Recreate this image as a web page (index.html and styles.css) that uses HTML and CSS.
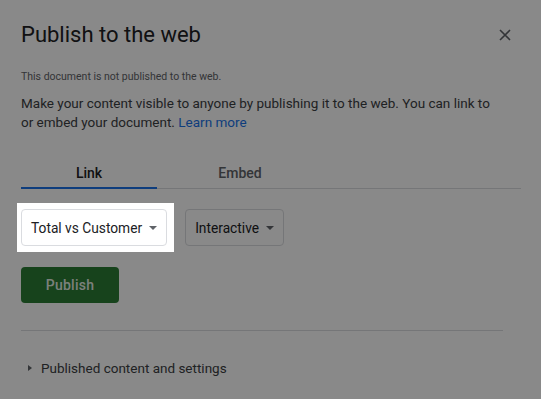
FILE: index.html
```html
<!DOCTYPE html>
<html lang="en">
<head>
<meta charset="utf-8">
<title>Publish to the web</title>
<link rel="stylesheet" href="styles.css">
</head>
<body>
<div class="dialog">
  <header class="head">
    <h1 class="title">Publish to the web</h1>
    <button class="close" aria-label="Close">
      <svg width="12" height="12" viewBox="0 0 12 12"><path d="M1 1L11 11M11 1L1 11" stroke="#5f6368" stroke-width="1.6" fill="none"/></svg>
    </button>
  </header>
  <p class="status">This document is not published to the web.</p>
  <p class="desc">Make your content visible to anyone by publishing it to the web. You can link to or embed your document. <a class="link" href="#">Learn more</a></p>
  <div class="tabs">
    <div class="tab tab-link active">Link</div>
    <div class="tab tab-embed">Embed</div>
  </div>
  <div class="row">
    <div class="spot">
      <div class="select"><span>Total vs Customer</span><span class="caret"></span></div>
    </div>
    <div class="select"><span>Interactive</span><span class="caret"></span></div>
  </div>
  <button class="publish">Publish</button>
  <hr class="divider">
  <div class="expander"><span class="tri"></span><span>Published content and settings</span></div>
</div>
<div class="scrim"></div>
</body>
</html>
```
FILE: styles.css
```css
html, body {
  margin: 0;
  padding: 0;
  background: #fff;
}
body {
  font-family: Roboto, "Liberation Sans", sans-serif;
  color: #3c4043;
  width: 541px;
  height: 399px;
  overflow: hidden;
}
.dialog {
  padding: 21px 20px 0 21px;
}
.head {
  display: flex;
  align-items: center;
  justify-content: space-between;
}
.title {
  margin: 0;
  font-size: 22px;
  line-height: 28px;
  font-weight: 400;
  color: #202124;
}
.close {
  width: 24px;
  height: 24px;
  margin-right: 4px;
  padding: 0;
  border: 0;
  background: none;
  display: flex;
  align-items: center;
  justify-content: center;
}
.status {
  margin: 20px 0 0;
  font-size: 10.5px;
  line-height: 16px;
  color: #5f6368;
}
.desc {
  margin: 9px 0 0;
  max-width: 475px;
  font-size: 13.5px;
  line-height: 19px;
  color: #3c4043;
}
.link {
  color: #1a73e8;
  text-decoration: none;
}
.tabs {
  margin-top: 18px;
  display: flex;
  border-bottom: 1px solid #dadce0;
}
.tab {
  padding: 13px 0 4px;
  font-size: 14px;
  line-height: 20px;
  font-weight: 500;
  text-align: center;
  color: #5f6368;
  border-bottom: 2px solid transparent;
  margin-bottom: -1px;
}
.tab-link { width: 136px; }
.tab-embed { width: 166px; }
.tab.active {
  color: #202124;
  border-bottom-color: #1a73e8;
}
.row {
  margin-top: 20px;
  display: flex;
  align-items: center;
  gap: 18px;
}
.spot {
  position: relative;
  z-index: 2;
  background: #fff;
  padding: 6px 7px 6px 4px;
  margin: -6px -7px -6px -4px;
}
.select {
  height: 37px;
  box-sizing: border-box;
  display: flex;
  align-items: center;
  gap: 7px;
  padding: 0 9px;
  border: 1px solid #dadce0;
  border-radius: 4px;
  font-size: 13.75px;
  color: #202124;
  background: #fff;
}
.caret {
  width: 0;
  height: 0;
  border-left: 4px solid transparent;
  border-right: 4px solid transparent;
  border-top: 4px solid #5f6368;
}
.publish {
  margin-top: 21px;
  width: 98px;
  height: 36px;
  border: 0;
  border-radius: 4px;
  background: #2b7d35;
  color: rgba(255, 255, 255, 0.9);
  font-family: Roboto, "Liberation Sans", sans-serif;
  font-size: 14px;
  font-weight: 500;
  letter-spacing: 0.25px;
  display: block;
}
.divider {
  margin: 27px 18px 0 0;
  border: 0;
  border-top: 1px solid #dadce0;
  height: 0;
}
.expander {
  margin-top: 27px;
  display: flex;
  align-items: center;
  gap: 9px;
  padding-left: 7px;
  font-size: 13.5px;
  line-height: 20px;
  color: #3c4043;
}
.tri {
  width: 0;
  height: 0;
  border-top: 3px solid transparent;
  border-bottom: 3px solid transparent;
  border-left: 4px solid #5f6368;
}
.scrim {
  position: fixed;
  inset: 0;
  background: rgba(0, 0, 0, 0.463);
  z-index: 1;
}
```
